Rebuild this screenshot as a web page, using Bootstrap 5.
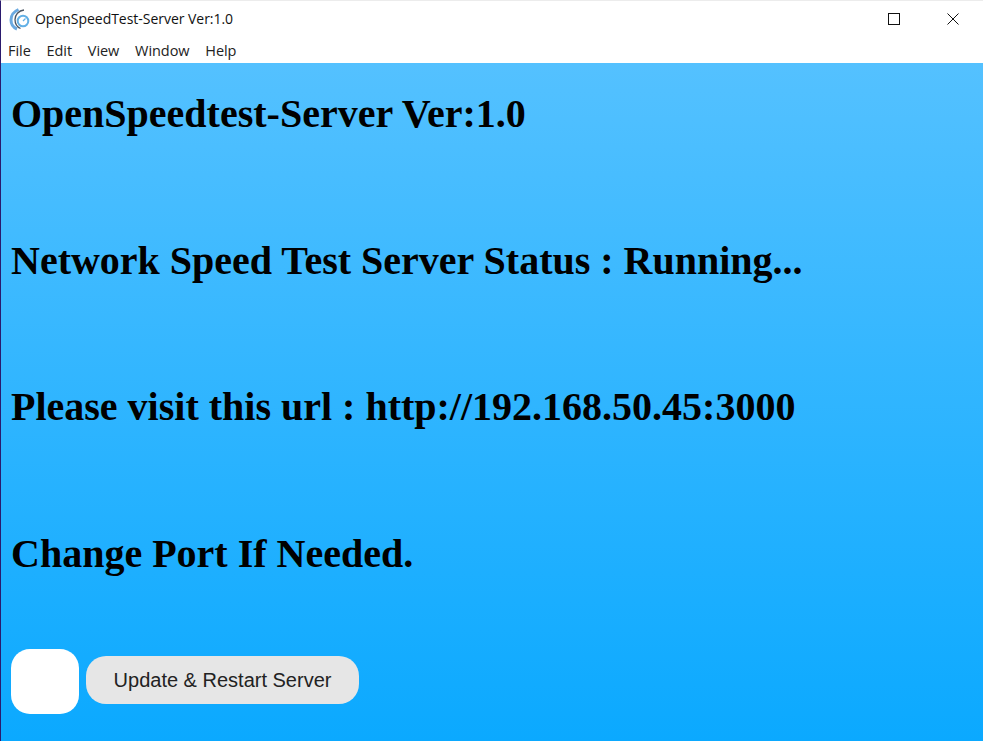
<!DOCTYPE html>
<html lang="en">
<head>
<meta charset="utf-8">
<title>OpenSpeedTest-Server Ver:1.0</title>
<link href="https://cdn.jsdelivr.net/npm/bootstrap@5.3.0/dist/css/bootstrap.min.css" rel="stylesheet">
<style>
html,body{height:100%;overflow:hidden}
body{background:#fff;font-family:"Open Sans","Noto Sans",sans-serif}
.app-window{width:983px;height:741px;border-left:1px solid #2a1a6e;border-top:1px solid #ececec}
.title-bar{height:36px;background:#fff;color:#111}
.title-text{font-size:14px;letter-spacing:-.03px;line-height:36px;margin-left:5px}
.app-logo{margin-left:8px}
.win-ctl{width:58px;height:36px}
.ctl-max{margin-right:1px}
.ctl-last{margin-right:1px}
.menu-row{height:26px;background:#fff;padding:1px 0 0 7px;gap:15.75px;font-size:14.5px;letter-spacing:-.05px;color:#222}
.app-body{height:678px;background:linear-gradient(#54c1ff,#0ba9ff);padding:28px 10px 0;font-family:"Liberation Serif",serif;color:#000}
.app-body h1{font-family:"Liberation Serif",serif;font-weight:700;font-size:40px;line-height:46px;margin:0 0 100.5px;padding:0}
.app-body h1:last-of-type{margin-bottom:72px}
.tile-white{width:68px;height:65px;background:#fff;border-radius:19px}
.update-btn{width:273px;height:48px;background:#e6e6e6;border:0;border-radius:20px;font-family:"Liberation Sans",sans-serif;font-size:20px;color:#222;padding:0;margin:0 0 3px 7px}
</style>
</head>
<body>
<div class="app-window d-flex flex-column">
  <div class="title-bar d-flex align-items-center">
    <svg class="app-logo" width="21" height="24" viewBox="0 0 21 24" fill="none">
      <path d="M9.500 2.500C5 4.500 2 8.500 2 13c0 4 2.500 7.500 6 9" stroke="#6aa9e0" stroke-width="3"/>
      <path d="M15 3C9.500 3.500 6 8 6 12.500c0 4 2 7.500 5.500 9" stroke="#4a5563" stroke-width="1.300"/>
      <circle cx="14" cy="14" r="5.300" stroke="#62b0e6" stroke-width="2"/>
      <path d="M14 14l2.500-2.500" stroke="#62b0e6" stroke-width="1.300"/>
    </svg>
    <span class="title-text flex-grow-1">OpenSpeedTest-Server Ver:1.0</span>
    <div class="win-ctl ctl-max d-flex align-items-center justify-content-center">
      <svg width="12" height="12" viewBox="0 0 12 12" fill="none"><rect x=".5" y=".5" width="11" height="11" stroke="#111"/></svg>
    </div>
    <div class="win-ctl ctl-last d-flex align-items-center justify-content-center">
      <svg width="12" height="12" viewBox="0 0 12 12" fill="none"><path d="M.5.500l11 11M11.500.500l-11 11" stroke="#111"/></svg>
    </div>
  </div>
  <div class="menu-row d-flex align-items-center">
    <span>File</span><span>Edit</span><span>View</span><span>Window</span><span>Help</span>
  </div>
  <div class="app-body">
    <h1>OpenSpeedtest-Server Ver:1.0</h1>
    <h1>Network Speed Test Server Status : Running...</h1>
    <h1>Please visit this url : http://192.168.50.45:3000</h1>
    <h1>Change Port If Needed.</h1>
    <div class="d-flex align-items-center action-row">
      <div class="tile-white"></div>
      <button type="button" class="btn update-btn">Update &amp; Restart Server</button>
    </div>
  </div>
</div>
<script src="https://cdn.jsdelivr.net/npm/bootstrap@5.3.0/dist/js/bootstrap.bundle.min.js"></script>
</body>
</html>
